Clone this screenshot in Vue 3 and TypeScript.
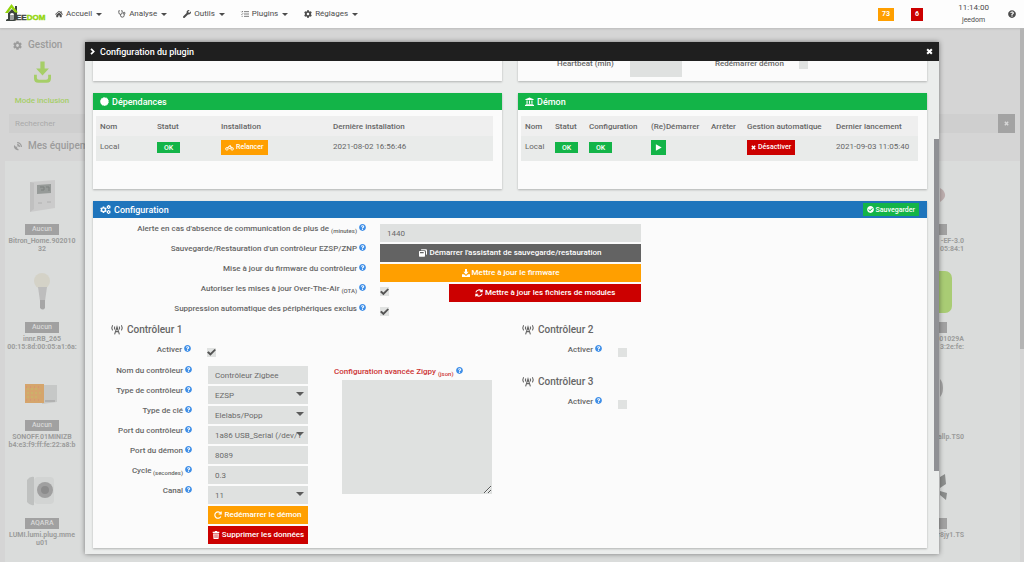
<script setup lang="ts">
import { h, ref } from 'vue'

interface Glyph { box: string; d: string; stroke?: number }

const glyphs: Record<string, Glyph> = {
  home: { box: '0 0 24 24', d: 'M12 2 0 12.5l1.6 1.9L12 5.3l10.4 9.1 1.6-1.9-4-3.5V3.5h-3.2v2.7zM12 7.2 3.8 14.4V22h6v-5.5h4.4V22h6v-7.600z' },
  stetho: { box: '0 0 24 24', stroke: 2.6, d: 'M5 2H2.500v6a5 5 0 0 0 10 0V2H10M7.500 13v3a5.500 5.500 0 0 0 11 0v-4M18.500 12a2.600 2.600 0 1 0-.1-5.200 2.600 2.600 0 0 0 .1 5.200' },
  wrench: { box: '0 0 512 512', d: 'M507.730 109.100c-2.240-9.030-13.540-12.090-20.120-5.510l-74.360 74.360-67.880-11.310-11.310-67.880 74.360-74.360c6.620-6.620 3.430-17.900-5.660-20.160-47.380-11.740-99.550.91-136.580 37.930-39.640 39.640-50.550 97.100-34.050 147.200L18.740 402.760c-24.990 24.990-24.990 65.510 0 90.500 24.990 24.990 65.510 24.990 90.500 0l213.210-213.210c50.120 16.710 107.470 5.680 147.370-34.220 37.070-37.070 49.700-89.320 37.910-136.730z' },
  list: { box: '0 0 24 24', stroke: 2.2, d: 'M9 5h15M9 12h15M9 19h15M1 5l1.600 1.600L6 3M1 12l1.600 1.600L6 10M2 19h3' },
  cog: { box: '0 0 512 512', d: 'M487.4 315.7l-42.6-24.6c4.3-23.2 4.3-47 0-70.2l42.6-24.6c4.9-2.8 7.1-8.6 5.5-14-11.1-35.6-30-67.8-54.7-94.6-3.8-4.1-10-5.1-14.8-2.3L380.8 110c-17.9-15.4-38.5-27.3-60.8-35.1V25.8c0-5.6-3.9-10.5-9.4-11.7-36.7-8.2-74.3-7.8-109.2 0-5.5 1.2-9.4 6.1-9.4 11.7V75c-22.2 7.9-42.8 19.8-60.8 35.1L88.7 85.5c-4.9-2.8-11-1.9-14.8 2.3-24.7 26.7-43.6 58.9-54.7 94.6-1.7 5.400.6 11.2 5.500 14L67.3 221c-4.3 23.2-4.3 47 0 70.2l-42.6 24.6c-4.9 2.8-7.1 8.6-5.5 14 11.1 35.6 30 67.8 54.7 94.6 3.8 4.1 10 5.1 14.8 2.3l42.6-24.6c17.9 15.4 38.5 27.3 60.8 35.1v49.2c0 5.6 3.9 10.5 9.4 11.7 36.7 8.2 74.3 7.8 109.2 0 5.5-1.2 9.4-6.1 9.4-11.7v-49.2c22.2-7.9 42.8-19.8 60.8-35.1l42.6 24.6c4.9 2.8 11 1.9 14.8-2.3 24.7-26.7 43.6-58.9 54.7-94.6 1.5-5.5-.7-11.3-5.6-14.1zM256 336c-44.1 0-80-35.9-80-80s35.9-80 80-80 80 35.9 80 80-35.9 80-80 80z' },
  cogs: { box: '0 0 30 24', d: 'M7.500 4h4l.6 2.500 1.700.9 2.500-.8 2 3.400-1.900 1.800v1.900l1.900 1.800-2 3.400-2.500-.8-1.700.9-.6 2.500h-4l-.6-2.500-1.700-.9-2.500.8-2-3.400 1.900-1.800v-1.900L.7 10l2-3.400 2.500.8 1.700-.9zM9.500 9.300a3.500 3.500 0 1 0 0 7 3.500 3.500 0 0 0 0-7zM22 0h3l.5 1.600 2-.3 1.500 2.600-1.200 1.300L29 6.700l-1.500 2.500-2-.3L25 10.500h-3l-.5-1.600-2 .3L18 6.700l1.200-1.500L18 3.900l1.500-2.600 2 .3zM23.500 3.500a1.800 1.800 0 1 0 0 3.600 1.800 1.800 0 0 0 0-3.600zM22 13.500h3l.5 1.600 2-.3 1.500 2.600-1.200 1.300 1.200 1.500-1.500 2.500-2-.3-.5 1.600h-3l-.5-1.600-2 .3-1.500-2.500 1.200-1.500-1.200-1.300 1.500-2.600 2 .3zM23.500 17a1.800 1.800 0 1 0 0 3.600 1.800 1.800 0 0 0 0-3.600z' },
  question: { box: '0 0 512 512', d: 'M504 256c0 136.997-111.043 248-248 248S8 392.997 8 256C8 119.083 119.043 8 256 8s248 111.083 248 248zM262.655 90c-54.497 0-89.255 22.957-116.549 63.758-3.536 5.286-2.353 12.415 2.715 16.258l34.699 26.31c5.205 3.947 12.621 3.008 16.665-2.122 17.864-22.658 30.113-35.797 57.303-35.797 20.429 0 45.698 13.148 45.698 32.958 0 14.976-12.363 22.667-32.534 33.976C247.128 238.528 216 254.941 216 296v4c0 6.627 5.373 12 12 12h56c6.627 0 12-5.373 12-12v-1.333c0-28.462 83.186-29.647 83.186-106.667 0-58.002-60.165-102-116.531-102zM256 338c-25.365 0-46 20.635-46 46 0 25.364 20.635 46 46 46s46-20.636 46-46c0-25.365-20.635-46-46-46z' },
  check: { box: '0 0 512 512', d: 'M504 256c0 136.967-111.033 248-248 248S8 392.967 8 256 119.033 8 256 8s248 111.033 248 248zM227.314 387.314l184-184c6.248-6.248 6.248-16.379 0-22.627l-22.627-22.627c-6.248-6.249-16.379-6.249-22.628 0L216 308.118l-70.059-70.059c-6.248-6.248-16.379-6.248-22.628 0l-22.627 22.627c-6.248 6.248-6.248 16.379 0 22.627l104 104c6.249 6.249 16.379 6.249 22.628.001z' },
  seal: { box: '0 0 24 24', d: 'M12 0l2.400 1.700 2.900-.5 1.300 2.600 2.800.8v3l2.100 2.100-1.100 2.700 1.100 2.700-2.300 1.900-.2 3-2.900.7-1.500 2.500-2.900-.7L11 24l-2.300-1.800-2.900.2-1.200-2.700-2.700-1.100.2-2.900L0 13.400l1.300-2.600-.8-2.900 2.500-1.500.6-2.900 3-.2L8.700.9l2.600.8z' },
  bank: { box: '0 0 24 24', d: 'M12 1 1 6v2h22V6zM4 9h3v9H4zM10.500 9h3v9h-3zM17 9h3v9h-3zM2 19h20v2H2zM0 21.500h24V24H0z' },
  bike: { box: '0 0 30 24', stroke: 3, d: 'M6 21a4.500 4.500 0 1 0 0-9 4.500 4.500 0 0 0 0 9zM24 21a4.500 4.500 0 1 0 0-9 4.500 4.500 0 0 0 0 9zM6 16l6-8h7l5 8M11 11l5 6 4-6-2-6h-3' },
  play: { box: '0 0 24 24', d: 'M3 1v22l20-11z' },
  times: { box: '0 0 24 24', stroke: 7, d: 'M4 4l16 16M20 4 4 20' },
  copies: { box: '0 0 24 24', d: 'M7 1h14a3 3 0 0 1 3 3v11a2 2 0 0 1-2 2h-1V8a4 4 0 0 0-4-4H6V3zM2 6h13a3 3 0 0 1 3 3v12a2 2 0 0 1-2 2H2a2 2 0 0 1-2-2V8a2 2 0 0 1 2-2zM3 9v4h11V9z' },
  download: { box: '0 0 24 24', d: 'M9 0h6v8h5l-8 9-8-9h5zM0 16h6l6 5 6-5h6v8H0z' },
  inclusion: { box: '0 0 24 30', d: 'M9 0h6v10h6l-9 10-9-10h6zM0 19h4v4q0 3 3 3h10q3 0 3-3v-4h4v5q0 6-6 6H6q-6 0-6-6z' },
  sync: { box: '0 0 24 24', stroke: 3.2, d: 'M2.500 10A10 10 0 0 1 20 6.500M21.500 1.500v7h-7M21.500 14A10 10 0 0 1 4 17.500M2.500 22.500v-7h7' },
  redo: { box: '0 0 24 24', stroke: 3.4, d: 'M20.500 16.500A9.500 9.500 0 1 1 19.500 6.500M21.500 1.500v7.500h-7.500' },
  trash: { box: '0 0 24 24', d: 'M2 2h6l1-2h6l1 2h6v4H2zM3.500 7.500h17L19.500 24h-15zM8 10v11h1.500V10zM11.300 10v11h1.500V10zM14.600 10v11h1.500V10z' },
  chevron: { box: '0 0 24 24', stroke: 6, d: 'M7 3l9 9-9 9' },
  dish: { box: '0 0 24 24', d: 'M3 8a10 10 0 0 0 13 13l-6-6 2.500-2.500-1.500-1.500L8.500 13.500zM11 0a13 13 0 0 1 13 13h-3.500A9.500 9.500 0 0 0 11 3.500zM11 5.500a7.500 7.500 0 0 1 7.500 7.500H15a4 4 0 0 0-4-4z' },
  antenna: { box: '0 0 30 24', stroke: 2.8, d: 'M9 23 15 4l6 19M11 16h8M12.500 10h5M9.500 3q-2 4 0 8M20.500 3q2 4 0 8M4 0q-4 6.500 0 13M26 0q4 6.500 0 13' },
}

const Icon = (props: { name: string }) => {
  const g = glyphs[props.name]
  return h('svg', { viewBox: g.box, class: ['icon', 'icon-' + props.name], 'aria-hidden': 'true' }, [
    h('path', g.stroke
      ? { d: g.d, fill: 'none', stroke: 'currentColor', 'stroke-width': g.stroke }
      : { d: g.d, fill: 'currentColor', 'fill-rule': 'evenodd' }),
  ])
}
Icon.props = ['name']

const menus = [
  { icon: 'home', label: 'Accueil' },
  { icon: 'stetho', label: 'Analyse' },
  { icon: 'wrench', label: 'Outils' },
  { icon: 'list', label: 'Plugins' },
  { icon: 'cog', label: 'Réglages' },
]

const equipment = [
  { kind: 'thermostat', room: 'Aucun', lines: ['Bitron_Home.902010', '32'] },
  { kind: 'bulb', room: 'Aucun', lines: ['innr.RB_265', '00:15:8d:00:05:a1:6a:'] },
  { kind: 'relay', room: 'Aucun', lines: ['SONOFF.01MINIZB', 'b4:e3:f9:ff:fe:22:a8:b'] },
  { kind: 'plug', room: 'AQARA', lines: ['LUMI.lumi.plug.mme', 'u01'] },
]

const edge = [
  { kind: 'red', tag: true, lines: ['-EF-3.0', '05:84:1'] },
  { kind: 'green', tag: true, lines: ['01029A', '3:2e:fe:'] },
  { kind: 'round', tag: false, lines: ['allp.TS0'] },
  { kind: 'dark', tag: true, lines: ['r8jy1.TS'] },
]

const alertDelay = ref('1440')
const ota = ref(true)
const autoRemove = ref(true)
const enabled1 = ref(true)
const zigpy = ref('')

const fields = ref([
  { id: 'name', label: 'Nom du contrôleur', unit: '', value: 'Contrôleur Zigbee', select: false },
  { id: 'type', label: 'Type de contrôleur', unit: '', value: 'EZSP', select: true },
  { id: 'key', label: 'Type de clé', unit: '', value: 'Elelabs/Popp', select: true },
  { id: 'port', label: 'Port du contrôleur', unit: '', value: '1a86 USB_Serial (/dev/T', select: true },
  { id: 'dport', label: 'Port du démon', unit: '', value: '8089', select: false },
  { id: 'cycle', label: 'Cycle', unit: '(secondes)', value: '0.3', select: false },
  { id: 'canal', label: 'Canal', unit: '', value: '11', select: true },
])

const others = ref([
  { n: 2, on: false },
  { n: 3, on: false },
])
</script>

<template>
  <div class="page">
    <header class="topbar">
      <a href="#" class="logo" aria-label="Jeedom">
        <svg viewBox="0 0 40 20">
          <path d="M3 9 7 5l4 4v7H9v-5q0-2-2-2t-2 2v5H2v-1h1z" fill="#3d4440" />
          <path d="M5.500 11h1v4h-1zM7.500 11h1v4h-1z" fill="#3d4440" />
          <path d="M10 2h2v12q0 3-3 3H1v-1.500h7q2 0 2-2z" fill="#3d4440" />
          <path d="M0 9 6.500 0 13 8.500h-3L6.500 4 3 9z" fill="#93d50a" />
          <text x="11" y="16" class="mark">EE<tspan class="lime">DOM</tspan></text>
        </svg>
      </a>
      <nav class="menus">
        <a v-for="m in menus" :key="m.label" href="#" class="menu">
          <Icon :name="m.icon" /><span>{{ m.label }}</span><i class="caret"></i>
        </a>
      </nav>
      <span class="count orange">73</span>
      <span class="count red">6</span>
      <div class="clock"><span>11:14:00</span><a href="#">jeedom</a></div>
      <a href="#" class="help" aria-label="Aide"><Icon name="question" /></a>
    </header>

    <main class="backdrop">
      <h2 class="side-title"><Icon name="cog" />Gestion</h2>
      <button class="inclusion"><Icon name="inclusion" /><span>Mode inclusion</span></button>
      <div class="search">
        <input type="text" placeholder="Rechercher" aria-label="Rechercher" />
        <button aria-label="Effacer"><Icon name="times" /></button>
      </div>
      <h2 class="side-title equip"><Icon name="dish" />Mes équipements</h2>
      <div class="shelf">
        <div class="col">
          <article v-for="e in equipment" :key="e.kind" class="device">
            <svg class="pic" viewBox="0 0 36 44">
              <g v-if="e.kind === 'thermostat'">
                <path d="M6 7 31 5v28L6 37z" fill="#cbcbcb" /><path d="M6 7l4 1v26l-4 3z" fill="#c0c0c0" />
                <path d="M13 10l14-1v9l-14 1z" fill="#969a98" /><path d="M16 12h4v3h-3M22 12h3v4" stroke="#7d807e" fill="none" />
                <path d="M14 28h4M23 27h4" stroke="#b0b0b0" />
              </g>
              <g v-else-if="e.kind === 'bulb'">
                <circle cx="18" cy="8" r="8" fill="#d4d2c7" /><path d="M14 14h9l-2 14h-5z" fill="#bdbdbd" />
                <path d="M16 27h5v8q-2 3-5 0z" fill="#a6a6a6" />
              </g>
              <g v-else-if="e.kind === 'relay'">
                <path d="M18 14h15v17l-15 2z" fill="#c6c8c7" /><path d="M1 13h19v19H1z" fill="#d5a56c" />
                <path d="M3 18h12M3 22h15M3 26h11" stroke="#c3bd68" stroke-dasharray="2 2" /><path d="M2 16h16M2 29h15" stroke="#d88977" stroke-dasharray="1 3" />
                <path d="M21 30h10" stroke="#9b9b9b" />
              </g>
              <g v-else>
                <path d="M3 11q3-4 7-3v28q-4 1-7-3z" fill="#bfc1c0" /><rect x="10" y="8" width="20" height="27" rx="4" fill="#d2d4d3" />
                <circle cx="21" cy="21" r="8" fill="#a0a0a0" /><circle cx="21" cy="21" r="4" fill="#8c8c8c" />
              </g>
            </svg>
            <span class="tag">{{ e.room }}</span>
            <span v-for="l in e.lines" :key="l" class="line">{{ l }}</span>
          </article>
        </div>
        <div class="col end">
          <article v-for="e in edge" :key="e.kind" class="device">
            <svg class="pic" viewBox="0 0 24 44">
              <path v-if="e.kind === 'red'" d="M0 13q4 2 5 6t-5 8z" fill="#bdaeae" />
              <rect v-else-if="e.kind === 'green'" x="-20" y="-2" width="32" height="42" rx="7" fill="#a9cc74" />
              <path v-else-if="e.kind === 'round'" d="M0 8q3 3 3 9t-3 9z" fill="#a3a3a3" />
              <path v-else d="M0 8l5-3 1 10-6 4zM0 22l7 2-1 7-6-5z" fill="#8b8d8c" />
            </svg>
            <span class="tag" :class="{ none: !e.tag }"></span>
            <span v-for="l in e.lines" :key="l" class="line">{{ l }}</span>
          </article>
        </div>
      </div>
      <i class="page-thumb"></i>
    </main>

    <section class="modal" role="dialog" aria-labelledby="dlg-title">
      <header class="modal-head">
        <Icon name="chevron" />
        <h1 id="dlg-title">Configuration du plugin</h1>
        <button aria-label="Fermer"><Icon name="times" /></button>
      </header>
      <div class="modal-body">
        <i class="thumb"></i>
        <div class="pair scrolled">
          <div class="panel"></div>
          <div class="panel beat">
            <label for="beat">Heartbeat (min)</label>
            <input id="beat" class="field" type="text" />
            <label for="restart">Redémarrer démon</label>
            <input id="restart" class="box" type="checkbox" />
          </div>
        </div>

        <div class="pair">
          <section class="panel">
            <h3 class="bar green"><Icon name="seal" />Dépendances</h3>
            <table class="deps">
              <colgroup><col class="d1" /><col class="d2" /><col class="d3" /><col /></colgroup>
              <thead><tr><th>Nom</th><th>Statut</th><th>Installation</th><th>Dernière installation</th></tr></thead>
              <tbody>
                <tr>
                  <td>Local</td>
                  <td><span class="ok">OK</span></td>
                  <td><button class="mini orange"><Icon name="bike" />Relancer</button></td>
                  <td>2021-08-02 16:56:46</td>
                </tr>
              </tbody>
            </table>
          </section>
          <section class="panel">
            <h3 class="bar green"><Icon name="bank" />Démon</h3>
            <table class="daemon">
              <colgroup><col class="m1" /><col class="m2" /><col class="m3" /><col class="m4" /><col class="m5" /><col class="m6" /><col /></colgroup>
              <thead>
                <tr><th>Nom</th><th>Statut</th><th>Configuration</th><th>(Re)Démarrer</th><th>Arrêter</th><th>Gestion automatique</th><th>Dernier lancement</th></tr>
              </thead>
              <tbody>
                <tr>
                  <td>Local</td>
                  <td><span class="ok">OK</span></td>
                  <td><span class="ok">OK</span></td>
                  <td><button class="mini green" aria-label="Démarrer"><Icon name="play" /></button></td>
                  <td></td>
                  <td><button class="mini red"><Icon name="times" />Désactiver</button></td>
                  <td>2021-09-03 11:05:40</td>
                </tr>
              </tbody>
            </table>
          </section>
        </div>

        <section class="panel config">
          <h3 class="bar blue"><Icon name="cogs" />Configuration<button class="save"><Icon name="check" />Sauvegarder</button></h3>

          <div class="general">
            <label for="alert"><span>Alerte en cas d'absence de communication de plus de <sub>(minutes)</sub></span><Icon name="question" /></label>
            <input id="alert" v-model="alertDelay" class="field" type="text" />
            <label for="backup"><span>Sauvegarde/Restauration d'un contrôleur EZSP/ZNP</span><Icon name="question" /></label>
            <button id="backup" class="wide grey"><Icon name="copies" />Démarrer l'assistant de sauvegarde/restauration</button>
            <label for="firmware"><span>Mise à jour du firmware du contrôleur</span><Icon name="question" /></label>
            <button id="firmware" class="wide orange"><Icon name="download" />Mettre à jour le firmware</button>
            <label for="ota"><span>Autoriser les mises à jour Over-The-Air <sub>(OTA)</sub></span><Icon name="question" /></label>
            <div class="split">
              <input id="ota" v-model="ota" class="box" type="checkbox" />
              <button class="wide red"><Icon name="sync" />Mettre à jour les fichiers de modules</button>
            </div>
            <label for="excl"><span>Suppression automatique des périphériques exclus</span><Icon name="question" /></label>
            <div class="split"><input id="excl" v-model="autoRemove" class="box" type="checkbox" /></div>
          </div>

          <div class="controllers">
            <div>
              <h4><Icon name="antenna" />Contrôleur 1</h4>
              <div class="row activate">
                <label for="on1"><span>Activer</span><Icon name="question" /></label>
                <input id="on1" v-model="enabled1" class="box" type="checkbox" />
              </div>
              <div class="details">
                <div class="stack">
                  <div v-for="f in fields" :key="f.id" class="row">
                    <label :for="f.id"><span>{{ f.label }}<sub v-if="f.unit">&nbsp;{{ f.unit }}</sub></span><Icon name="question" /></label>
                    <div v-if="f.select" class="select">
                      <select :id="f.id" v-model="f.value" class="field"><option>{{ f.value }}</option></select>
                      <i class="caret"></i>
                    </div>
                    <input v-else :id="f.id" v-model="f.value" class="field" type="text" />
                  </div>
                  <div class="row"><button class="wide orange"><Icon name="redo" />Redémarrer le démon</button></div>
                  <div class="row"><button class="wide red"><Icon name="trash" />Supprimer les données</button></div>
                </div>
                <div class="advanced">
                  <label for="zigpy"><span>Configuration avancée Zigpy <sub>(json)</sub></span><Icon name="question" /></label>
                  <textarea id="zigpy" v-model="zigpy" class="field"></textarea>
                </div>
              </div>
            </div>
            <div>
              <div v-for="c in others" :key="c.n" class="other">
                <h4><Icon name="antenna" />Contrôleur {{ c.n }}</h4>
                <div class="row activate">
                  <label :for="'on' + c.n"><span>Activer</span><Icon name="question" /></label>
                  <input :id="'on' + c.n" v-model="c.on" class="box" type="checkbox" />
                </div>
              </div>
            </div>
          </div>
        </section>
      </div>
    </section>
  </div>
</template>

<style>
body { background: #d5d5d5; }
</style>

<style scoped>
* { box-sizing: border-box; margin: 0; padding: 0; }
.page { position: relative; height: 100vh; overflow: hidden; display: flex; flex-direction: column; font: 500 8px/10px Roboto, "Liberation Sans", sans-serif; color: #666; }
button, input, select, textarea { font: inherit; color: inherit; border: 0; border-radius: 0; background: none; outline: none; }
button { display: inline-flex; align-items: center; justify-content: center; gap: 2px; white-space: nowrap; cursor: pointer; }
a { color: inherit; text-decoration: none; }
.icon { width: 8px; height: 8px; flex: none; overflow: visible; }
.orange { background: #ff9f00; color: #fff; }
.red { background: #cc0000; color: #fff; }
.green { background: #13b448; color: #fff; }
.blue { background: #1f75bc; color: #fff; }
.grey { background: #636363; color: #fff; }
.caret { width: 0; height: 0; border: 3px solid transparent; border-top-color: currentColor; border-bottom: 0; }

.topbar { flex: none; height: 28px; display: flex; align-items: center; padding: 0 8px 0 5px; background: #fdfdfd; color: #4c4c4c; box-shadow: 0 1px 2px #bbb; z-index: 1; }
.logo { width: 40px; height: 20px; margin-right: 10px; }
.logo svg { display: block; width: 100%; height: 100%; overflow: visible; }
.mark { font: bold 8px "Liberation Sans", sans-serif; fill: #3d4440; stroke: #3d4440; stroke-width: .4; }
.lime { fill: #93d50a; stroke: #93d50a; }
.menus { flex: 1; display: flex; gap: 16px; font-weight: 400; }
.menu { display: flex; align-items: center; gap: 3px; }
.menu .caret { margin-left: 1px; }
.count { padding: 2px 4px; font-size: 7px; line-height: 9px; font-weight: 700; margin-right: 17px; }
.count.red { margin-right: 35px; }
.clock { display: flex; flex-direction: column; align-items: center; font-weight: 400; line-height: 12px; margin-right: 19px; }
.clock a { font-size: 7px; }
.help { display: flex; }

.backdrop { position: relative; flex: 1; min-height: 0; background: #d5d5d5; color: #9c9c9c; display: flex; flex-direction: column; overflow: hidden; }
.side-title { display: flex; align-items: center; gap: 6px; padding-left: 13px; width: 85px; height: 14px; margin-top: 10px; font-size: 10px; line-height: 14px; font-weight: 500; white-space: nowrap; overflow: hidden; }
.side-title .icon { width: 9px; height: 9px; }
.inclusion { align-self: flex-start; flex-direction: column; gap: 13px; width: 84px; margin-top: 9px; color: #a6ce68; }
.inclusion .icon { width: 17px; height: 22px; }
.search { display: flex; flex: none; height: 19px; margin: 8px 9px 0; background: #cfcfcf; }
.search input { flex: 1; padding-left: 6px; font-weight: 400; }
.search input::placeholder { color: #aaa; }
.search button { width: 17px; background: #a3a3a3; color: #d8d8d8; }
.search .icon { width: 5px; height: 5px; }
.equip { margin-top: 6px; }
.shelf { flex: 1; display: flex; justify-content: space-between; margin: 8px 4px 0 5px; padding-right: 56px; background: #dadcdb; }
.col { width: 74px; }
.device { height: 98px; display: flex; flex-direction: column; align-items: center; padding-top: 14px; font-size: 7px; line-height: 8px; font-weight: 700; }
.pic { width: 36px; height: 44px; margin-bottom: 5px; overflow: visible; flex: none; }
.tag { flex: none; width: 34px; height: 11px; line-height: 11px; text-align: center; background: #a1a1a1; color: #d8d8d8; font-weight: 500; margin-bottom: 2px; }
.line { white-space: nowrap; }
.end { width: 24px; }
.end .device { align-items: flex-end; }
.end .pic { width: 24px; }
.end .tag { margin-right: 17px; }
.end .none { background: none; }
.page-thumb { position: absolute; right: 0; top: 0; width: 4px; height: 321px; background: #b4b4b4; }

.modal { position: absolute; top: 42px; bottom: 8px; left: 85px; right: 85px; display: flex; flex-direction: column; background: #ebedec; box-shadow: 0 0 5px rgba(0, 0, 0, .45); z-index: 2; }
.modal-head { flex: none; height: 19px; display: flex; align-items: center; gap: 4px; padding: 0 6px 0 4px; background: #1f1f1f; color: #fff; }
.modal-head h1 { flex: 1; font-size: 9px; font-weight: 500; }
.modal-head .icon { width: 7px; height: 7px; }
.modal-body { position: relative; flex: 1; min-height: 0; overflow: hidden; display: flex; flex-direction: column; gap: 12px; padding: 0 12px 0 8px; }
.thumb { position: absolute; right: 0; top: 78px; width: 5px; height: 332px; background: #8f9094; }
.pair { display: grid; grid-template-columns: 1fr 1fr; gap: 16px; }
.scrolled { flex: none; margin-top: -6px; }
.panel { background: #fbfbfb; box-shadow: 0 1px 2px rgba(0, 0, 0, .25); }
.pair .panel { min-height: 96px; }
.scrolled .panel { min-height: 26px; height: 26px; }
.beat { display: flex; align-items: flex-start; padding: 4px 0 0 39px; }
.beat label { width: 73px; white-space: nowrap; }
.beat .field { width: 52px; margin-right: 33px; }
.beat label + .box { margin: 1px 0 0 11px; }
.bar { display: flex; align-items: center; gap: 3px; height: 17px; padding: 0 8px 0 7px; font-size: 9px; font-weight: 500; }
.bar .icon { width: 9px; height: 9px; }
.bar .icon-cogs { width: 11px; }
.save { margin-left: auto; height: 13px; padding: 0 4px; background: #13b448; color: #fff; font-size: 7px; }
.bar .save .icon { width: 7px; height: 7px; }

table { width: calc(100% - 12px); margin: 6px 8px 0 3px; border-collapse: collapse; table-layout: fixed; background: #e9ebea; }
thead { background: #efefef; }
th, td { text-align: left; padding: 0 0 0 4px; white-space: nowrap; }
th { height: 20px; padding-top: 2px; font-weight: 500; }
td { height: 25px; font-weight: 400; padding-bottom: 3px; }
.d1 { width: 57px; }
.d2 { width: 64px; }
.d3 { width: 112px; }
.m1 { width: 30px; }
.m2 { width: 34px; }
.m3 { width: 62px; }
.m4 { width: 60px; }
.m5 { width: 36px; }
.m6 { width: 89px; }
.ok { display: inline-block; width: 23px; height: 11px; line-height: 12px; text-align: center; background: #13b448; color: #fff; font-size: 7px; font-weight: 500; }
td button.mini { height: 15px; padding: 0 4px; font-size: 7px; font-weight: 500; vertical-align: middle; }
.mini .icon { width: 7px; height: 7px; }
.mini .icon-times { width: 5px; height: 5px; }
.mini .icon-bike { width: 9px; }

.config { flex: none; }
.field { display: block; width: 100%; height: 18px; padding: 1px 7px 0; background: #dfe1e0; color: #6a6a6a; font-weight: 400; }
.wide { width: 100%; height: 18px; }
label sub { font-size: 6px; line-height: 0; vertical-align: -2px; }
.general label, .row label, .advanced label { display: flex; justify-content: flex-end; align-items: flex-start; gap: 2px; height: 18px; white-space: nowrap; }
label .icon-question { width: 7px; height: 7px; color: #3f8fe8; }
.box { appearance: none; position: relative; flex: none; width: 9px; height: 9px; background: #e0e2e1; }
.box:checked::after { content: ""; position: absolute; inset: 1px 0 0 0; background: #555; clip-path: polygon(0 50%, 18% 34%, 38% 56%, 84% 6%, 100% 20%, 38% 92%); }
.general { display: grid; grid-template-columns: 273px minmax(0, 31.3%); column-gap: 14px; row-gap: 2px; padding-top: 6px; }
.general > * { height: 18px; }
.split { display: flex; justify-content: space-between; align-items: center; }
.split .box { margin-bottom: 3px; }
.split .wide { width: 73.5%; }
.controllers { display: grid; grid-template-columns: 411px 1fr; padding-left: 18px; }
h4 { display: flex; align-items: center; gap: 4px; height: 16px; font-size: 10px; font-weight: 500; }
h4 .icon { width: 12px; height: 10px; }
.row { display: grid; grid-template-columns: 81px 100px; column-gap: 16px; }
.row > .wide { grid-column: 2; }
.activate { align-items: center; grid-template-columns: 80px 100px; margin-top: 7px; height: 14px; }
.row.activate label { height: 14px; }
.other { height: 52px; }
.details { display: flex; margin-top: 7px; padding-bottom: 4px; gap: 26px; }
.stack { display: grid; row-gap: 2px; }
.select { position: relative; }
.select select { appearance: none; }
.select .caret { position: absolute; right: 4px; top: 6px; border-width: 4px 4px 0; color: #5c5c5c; }
.advanced label { justify-content: flex-start; height: 14px; padding-top: 1px; color: #cc3333; }
.advanced textarea { width: 150px; height: 114px; margin-left: 8px; resize: both; }
</style>
